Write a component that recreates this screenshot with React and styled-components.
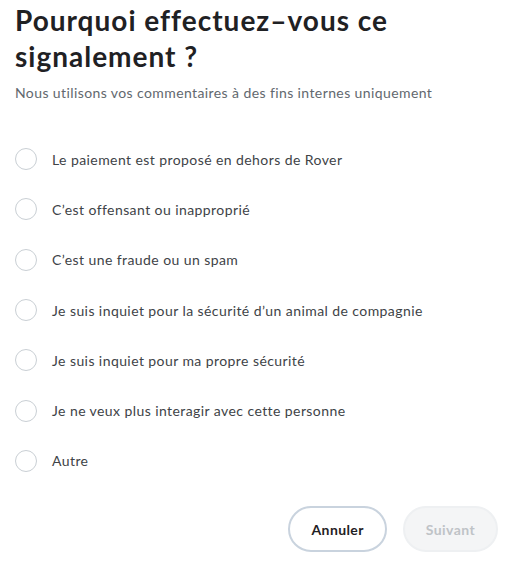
import React, { useState } from 'react';
import styled, { createGlobalStyle } from 'styled-components';

const GlobalStyle = createGlobalStyle`
	html, body {
		margin: 0;
		padding: 0;
		background: #fff;
	}
	body {
		font-family: Lato, "Noto Sans", sans-serif;
		color: #1f2124;
	}
`;

const StyledPage = styled.div`
	display: flex;
	flex-direction: column;
	width: 515px;
	height: 566px;
	box-sizing: border-box;
	padding: 2px 17px 0 15px;
`;

const Title = styled.h1`
	margin: 0;
	font-size: 28px;
	line-height: 36px;
	font-weight: 700;
	color: #1f2124;
	letter-spacing: 1px;
`;

const Subtitle = styled.p`
	margin: 9px 0 0;
	font-size: 14px;
	line-height: 20px;
	color: #62686e;
	letter-spacing: 0.4px;
`;

const OptionList = styled.div`
	display: flex;
	flex-direction: column;
	margin-top: 31px;
`;

const Option = styled.label`
	display: flex;
	align-items: center;
	gap: 15px;
	height: 50.3px;
	font-size: 14px;
	color: #404347;
	letter-spacing: 0.42px;
	cursor: pointer;
`;

const Radio = styled.span`
	flex: none;
	width: 20px;
	height: 20px;
	border-radius: 50%;
	border: 1px solid ${(props) => (props.checked ? '#1b6c42' : '#c9cfd4')};
	box-sizing: content-box;
	display: flex;
	align-items: center;
	justify-content: center;

	&::after {
		content: '';
		width: 10px;
		height: 10px;
		border-radius: 50%;
		background: ${(props) => (props.checked ? '#1b6c42' : 'transparent')};
	}
`;

const Actions = styled.div`
	display: flex;
	justify-content: flex-end;
	gap: 16px;
	margin-top: 20px;
`;

const Button = styled.button`
	height: 46px;
	padding: 0 21px;
	border-radius: 23px;
	font-family: inherit;
	font-size: 14px;
	font-weight: 700;
	letter-spacing: 0.4px;
	border: 2px solid ${(props) => (props.disabled ? '#eef0f2' : '#c9d3de')};
	background: ${(props) => (props.disabled ? '#f4f5f6' : '#fff')};
	color: ${(props) => (props.disabled ? '#bfc3c7' : '#1f2124')};
	cursor: ${(props) => (props.disabled ? 'default' : 'pointer')};
`;

const reasons = [
	'Le paiement est proposé en dehors de Rover',
	'C’est offensant ou inapproprié',
	'C’est une fraude ou un spam',
	'Je suis inquiet pour la sécurité d’un animal de compagnie',
	'Je suis inquiet pour ma propre sécurité',
	'Je ne veux plus interagir avec cette personne',
	'Autre',
];

const App = () => {
	const [selected, setSelected] = useState(null);
	return (
		<>
			<GlobalStyle />
			<StyledPage>
				<Title>Pourquoi effectuez–vous ce signalement ?</Title>
				<Subtitle>Nous utilisons vos commentaires à des fins internes uniquement</Subtitle>
				<OptionList>
					{reasons.map((reason, i) => (
						<Option key={reason} onClick={() => setSelected(i)}>
							<Radio checked={selected === i} />
							{reason}
						</Option>
					))}
				</OptionList>
				<Actions>
					<Button>Annuler</Button>
					<Button disabled={selected === null}>Suivant</Button>
				</Actions>
			</StyledPage>
		</>
	);
};

export default App;
